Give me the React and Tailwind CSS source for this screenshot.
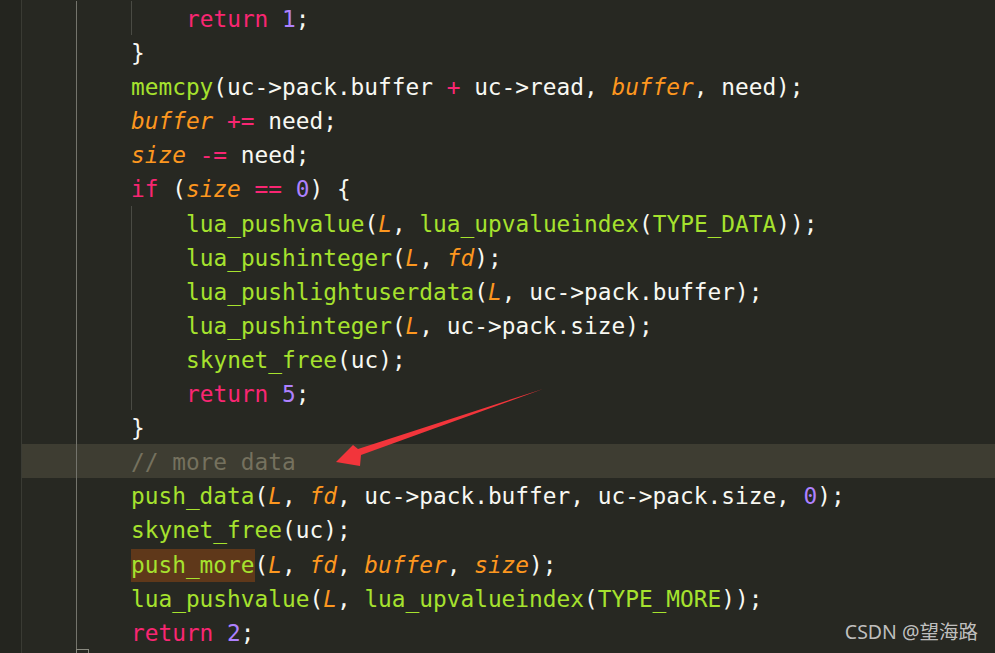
const K = "text-[#f92672]";
const F = "text-[#a6e22e]";
const P = "text-[#fd971f] italic";
const N = "text-[#ae81ff]";
const C = "text-[#75715e]";

const Line = ({ nested, active, children }) => (
  <div className={`flex h-[34.1px] items-center ${active ? "bg-[#3e3d32]" : ""}`}>
    <span className="w-[54px] h-full shrink-0"></span>
    <span className="w-[55px] h-full shrink-0 border-l border-[#74746c]"></span>
    {nested && <span className="w-[55px] h-full shrink-0 border-l border-[#4a4b44]"></span>}
    <span className="whitespace-pre pt-[2px]">{children}</span>
  </div>
);

const App = () => {
  return (
    <div
      className="relative h-[653px] w-full overflow-hidden bg-[#272822] text-[#f8f8f2] flex"
      style={{ fontFamily: '"DejaVu Sans Mono", "Liberation Mono", monospace' }}
    >
      {/* gutter */}
      <div className="w-[22px] h-full shrink-0 bg-[#24251f] border-r border-[#3a3b34]"></div>

      {/* code */}
      <div className="flex-1 pt-[1px] text-[22.8px] leading-[34.1px]">
        <Line nested>
          <span className={K}>return</span> <span className={N}>1</span>;
        </Line>
        <Line>{"}"}</Line>
        <Line>
          <span className={F}>memcpy</span>(uc-&gt;pack.buffer <span className={K}>+</span> uc-&gt;read,{" "}
          <span className={P}>buffer</span>, need);
        </Line>
        <Line>
          <span className={P}>buffer</span> <span className={K}>+=</span> need;
        </Line>
        <Line>
          <span className={P}>size</span> <span className={K}>-=</span> need;
        </Line>
        <Line>
          <span className={K}>if</span> (<span className={P}>size</span> <span className={K}>==</span>{" "}
          <span className={N}>0</span>) {"{"}
        </Line>
        <Line nested>
          <span className={F}>lua_pushvalue</span>(<span className={P}>L</span>,{" "}
          <span className={F}>lua_upvalueindex</span>(<span className={F}>TYPE_DATA</span>));
        </Line>
        <Line nested>
          <span className={F}>lua_pushinteger</span>(<span className={P}>L</span>, <span className={P}>fd</span>);
        </Line>
        <Line nested>
          <span className={F}>lua_pushlightuserdata</span>(<span className={P}>L</span>, uc-&gt;pack.buffer);
        </Line>
        <Line nested>
          <span className={F}>lua_pushinteger</span>(<span className={P}>L</span>, uc-&gt;pack.size);
        </Line>
        <Line nested>
          <span className={F}>skynet_free</span>(uc);
        </Line>
        <Line nested>
          <span className={K}>return</span> <span className={N}>5</span>;
        </Line>
        <Line>{"}"}</Line>
        <Line active>
          <span className={C}>// more data</span>
        </Line>
        <Line>
          <span className={F}>push_data</span>(<span className={P}>L</span>, <span className={P}>fd</span>,
          uc-&gt;pack.buffer, uc-&gt;pack.size, <span className={N}>0</span>);
        </Line>
        <Line>
          <span className={F}>skynet_free</span>(uc);
        </Line>
        <Line>
          <span className={`${F} bg-[#5f381a] inline-block leading-[33px]`}>push_more</span>(
          <span className={P}>L</span>, <span className={P}>fd</span>, <span className={P}>buffer</span>,{" "}
          <span className={P}>size</span>);
        </Line>
        <Line>
          <span className={F}>lua_pushvalue</span>(<span className={P}>L</span>,{" "}
          <span className={F}>lua_upvalueindex</span>(<span className={F}>TYPE_MORE</span>));
        </Line>
        <Line>
          <span className={K}>return</span> <span className={N}>2</span>;
        </Line>
        <div className="flex h-[34.1px]">
          <span className="w-[54px] shrink-0"></span>
          <span className="w-[13px] h-[12px] border border-[#8a8a80]"></span>
        </div>
      </div>

      {/* annotation arrow */}
      <svg className="absolute left-0 top-0 pointer-events-none" width="995" height="653">
        <polygon points="336,462 353,445 358,449 543,389 361,455 360,466" fill="#f2353b" />
      </svg>

      {/* watermark */}
      <div
        className="absolute right-[17px] bottom-[7px] text-[19.5px] text-[#d4d4d4]/90"
        style={{ fontFamily: '"Noto Sans", "Noto Sans CJK SC", sans-serif' }}
      >
        CSDN @望海路
      </div>
    </div>
  );
};

export default App;
